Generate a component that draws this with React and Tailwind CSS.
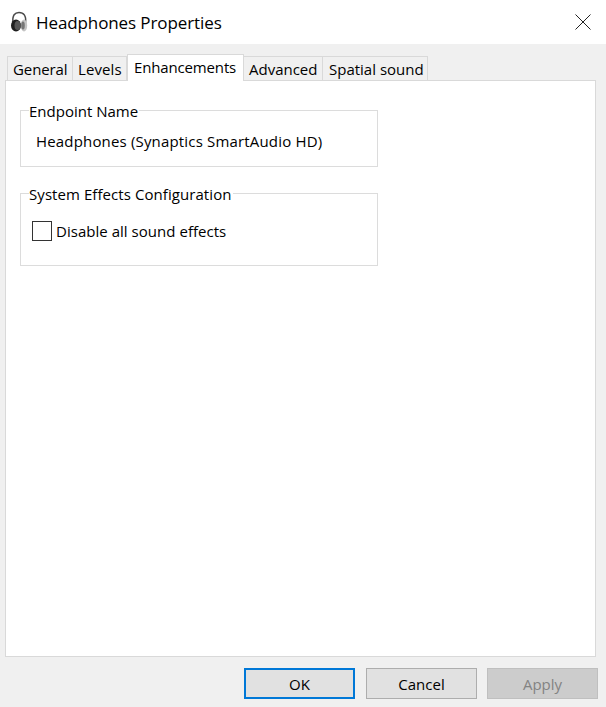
import React from "react";

const font = { fontFamily: '"Open Sans", "Noto Sans", sans-serif' };

function HeadphonesIcon() {
  return (
    <svg width="18" height="22" viewBox="0 0 18 22" className="shrink-0">
      <path d="M3 12 C2 4 5 1.5 9 1.5 C13.5 1.5 16.5 4.5 15.5 12" fill="none" stroke="#4a4a4a" strokeWidth="1.5" />
      <ellipse cx="6" cy="14.5" rx="5" ry="6" fill="#1f1f1f" />
      <ellipse cx="7.5" cy="14.5" rx="3" ry="4.5" fill="#555" />
      <ellipse cx="14" cy="14.5" rx="3.2" ry="6" fill="#c4c4c4" />
      <ellipse cx="13" cy="14.5" rx="1.8" ry="4" fill="#777" />
    </svg>
  );
}

function Tab({ label, w, active, text }) {
  if (active) {
    return (
      <div className={`${w} h-[27px] -mb-px relative z-10 bg-white border border-b-0 border-[#d9d9d9] pl-[6px] text-[15px] leading-[24px] text-black ${text || ""}`}>
        {label}
      </div>
    );
  }
  return (
    <div className={`${w} h-[24px] bg-[#f0f0f0] border border-l-0 first:border-l border-b-0 border-[#d9d9d9] pl-[5px] text-[15px] leading-[24px] text-black ${text || ""}`}>
      {label}
    </div>
  );
}

function Group({ title, className, legendClass, children }) {
  return (
    <fieldset className={`w-[358px] ml-[14px] border border-[#dcdcdc] pl-[8px] ${className}`}>
      <legend className={`text-[15px] leading-[20px] pt-[2px] text-black pr-[1px] ${legendClass || ""}`}>{title}</legend>
      {children}
    </fieldset>
  );
}

function Btn({ children, className }) {
  return (
    <div className={`w-[111px] h-[31px] flex items-center justify-center text-[15px] pt-[1px] ${className}`}>{children}</div>
  );
}

export default function App() {
  return (
    <div style={font} className="w-[606px] h-[707px] flex flex-col bg-[#f0f0f0] overflow-hidden">
      <div className="h-[44px] bg-white flex items-center pl-[10px] pr-[15px] shrink-0">
        <HeadphonesIcon />
        <span className="ml-[8px] pt-[1px] text-[17px] tracking-[-0.1px] text-black">Headphones Properties</span>
        <svg width="16" height="16" viewBox="0 0 16 16" className="ml-auto">
          <path d="M0.5 0.5 L15.5 15.5 M15.5 0.5 L0.5 15.5" stroke="#222" strokeWidth="1" fill="none" />
        </svg>
      </div>

      <div className="flex items-end h-[36px] pl-[7px] shrink-0">
        <Tab label="General" w="w-[66px]" text="tracking-[-0.1px]" />
        <Tab label="Levels" w="w-[54px]" text="tracking-[0.1px]" />
        <Tab label="Enhancements" w="w-[117px]" active text="tracking-[-0.15px]" />
        <Tab label="Advanced" w="w-[79px]" />
        <Tab label="Spatial sound" w="w-[105px]" text="pl-[6px]" />
      </div>

      <div className="w-[591px] h-[577px] ml-[5px] bg-white border border-[#d9d9d9] shrink-0 pt-[18px]">
        <Group title="Endpoint Name" className="h-[68px]">
          <div className="pl-[7px] pt-[10px] text-[15px] leading-[20px] tracking-[0.17px] text-black">Headphones (Synaptics SmartAudio HD)</div>
        </Group>
        <Group title="System Effects Configuration" legendClass="tracking-[0.07px]" className="h-[84px] mt-[15px]">
          <div className="flex items-center pl-[3px] pt-[17px]">
            <div className="w-[20px] h-[20px] border border-[#333] bg-white shrink-0" />
            <span className="ml-[4px] text-[15px] leading-[20px] tracking-[0.03px] text-black">Disable all sound effects</span>
          </div>
        </Group>
      </div>

      <div className="flex pl-[244px] pt-[11px] shrink-0">
        <Btn className="bg-[#e1e1e1] border-2 border-[#0078d7] text-black">OK</Btn>
        <Btn className="ml-[11px] bg-[#e1e1e1] border border-[#adadad] text-black">Cancel</Btn>
        <Btn className="ml-[10px] bg-[#cccccc] border border-[#bfbfbf] text-[#838383]">Apply</Btn>
      </div>
    </div>
  );
}
